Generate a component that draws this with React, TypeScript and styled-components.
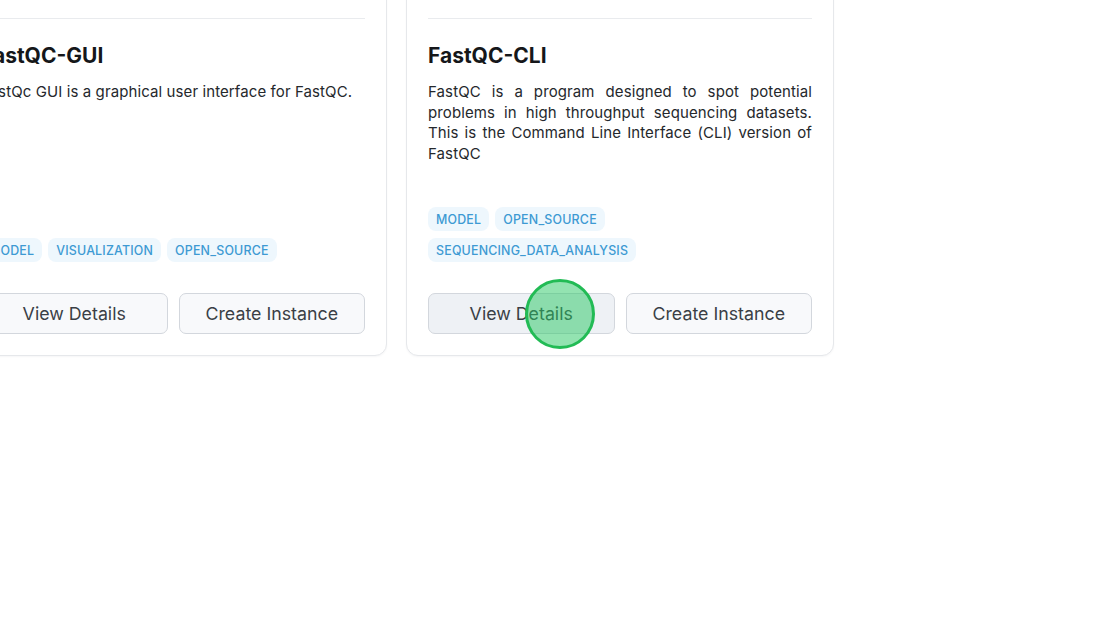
import styled, { createGlobalStyle } from "styled-components";

const GlobalStyle = createGlobalStyle`
  html, body {
    margin: 0;
    padding: 0;
    background: #ffffff;
    overflow: hidden;
  }
  body {
    font-family: Inter, "Noto Sans", sans-serif;
    color: #1f2328;
  }
`;

type Tool = {
  id: string;
  name: string;
  description: string;
  tags: string[];
};

const tools: Tool[] = [
  {
    id: "fastqc-gui",
    name: "FastQC-GUI",
    description: "FastQc GUI is a graphical user interface for FastQC.",
    tags: ["MODEL", "VISUALIZATION", "OPEN_SOURCE"],
  },
  {
    id: "fastqc-cli",
    name: "FastQC-CLI",
    description:
      "FastQC is a program designed to spot potential problems in high throughput sequencing datasets. This is the Command Line Interface (CLI) version of FastQC",
    tags: ["MODEL", "OPEN_SOURCE", "SEQUENCING_DATA_ANALYSIS"],
  },
];

export default function App() {
  return (
    <>
      <GlobalStyle />
      <Page>
        <CardGrid>
          {tools.map((tool, i) => (
            <Card key={tool.id}>
              <CardHead />
              <Title>{tool.name}</Title>
              <Description>{tool.description}</Description>
              <TagList>
                {tool.tags.map((tag) => (
                  <Tag key={tag}>{tag}</Tag>
                ))}
              </TagList>
              <Actions>
                <ActionButton $active={i === 1}>
                  View Details
                  {i === 1 && <ClickMark />}
                </ActionButton>
                <ActionButton>Create Instance</ActionButton>
              </Actions>
            </Card>
          ))}
        </CardGrid>
      </Page>
    </>
  );
}

const Page = styled.div`
  width: 1120px;
  height: 626px;
  overflow: hidden;
  background: #ffffff;
`;

const CardGrid = styled.div`
  display: grid;
  grid-template-columns: repeat(2, 428px);
  gap: 19px;
  margin: -30px 0 0 -41px;
`;

const Card = styled.div`
  display: flex;
  flex-direction: column;
  box-sizing: border-box;
  height: 386px;
  padding: 0 21px 21px;
  background: #ffffff;
  border: 1px solid #e6e8eb;
  border-radius: 12px;
  box-shadow: 0 1px 2px rgba(16, 24, 40, 0.04);
`;

const CardHead = styled.div`
  height: 47px;
  flex-shrink: 0;
  border-bottom: 1px solid #e9ebee;
`;

const Title = styled.h3`
  margin: 23px 0 0;
  font-size: 21px;
  line-height: 28px;
  font-weight: 700;
  color: #15171a;
`;

const Description = styled.p`
  flex: 1;
  margin: 12px 0 0;
  font-size: 15px;
  line-height: 20.7px;
  letter-spacing: 0.1px;
  color: #25282c;
  text-align: justify;
`;

const TagList = styled.div`
  display: flex;
  flex-wrap: wrap;
  gap: 7px 6px;
`;

const Tag = styled.span`
  display: inline-flex;
  align-items: center;
  height: 24px;
  padding: 0 8px;
  border-radius: 8px;
  background: #eef7fd;
  color: #3d9ad3;
  font-size: 12.4px;
  letter-spacing: 0.2px;
  font-weight: 500;
`;

const Actions = styled.div`
  display: grid;
  grid-template-columns: 1fr 1fr;
  gap: 11px;
  margin-top: 31px;
`;

const ActionButton = styled.button<{ $active?: boolean }>`
  position: relative;
  height: 41px;
  border: 1px solid #d3d7dd;
  border-radius: 7px;
  background: ${(p) => (p.$active ? "#eef1f5" : "#f8f9fb")};
  color: #3a3f46;
  font-family: inherit;
  font-size: 17.8px;
  font-weight: 400;
  cursor: pointer;
`;

const ClickMark = styled.span`
  position: absolute;
  left: 96px;
  top: -15px;
  width: 70px;
  height: 70px;
  box-sizing: border-box;
  border-radius: 50%;
  border: 3px solid #22bb55;
  background: rgba(40, 200, 100, 0.5);
  pointer-events: none;
`;
